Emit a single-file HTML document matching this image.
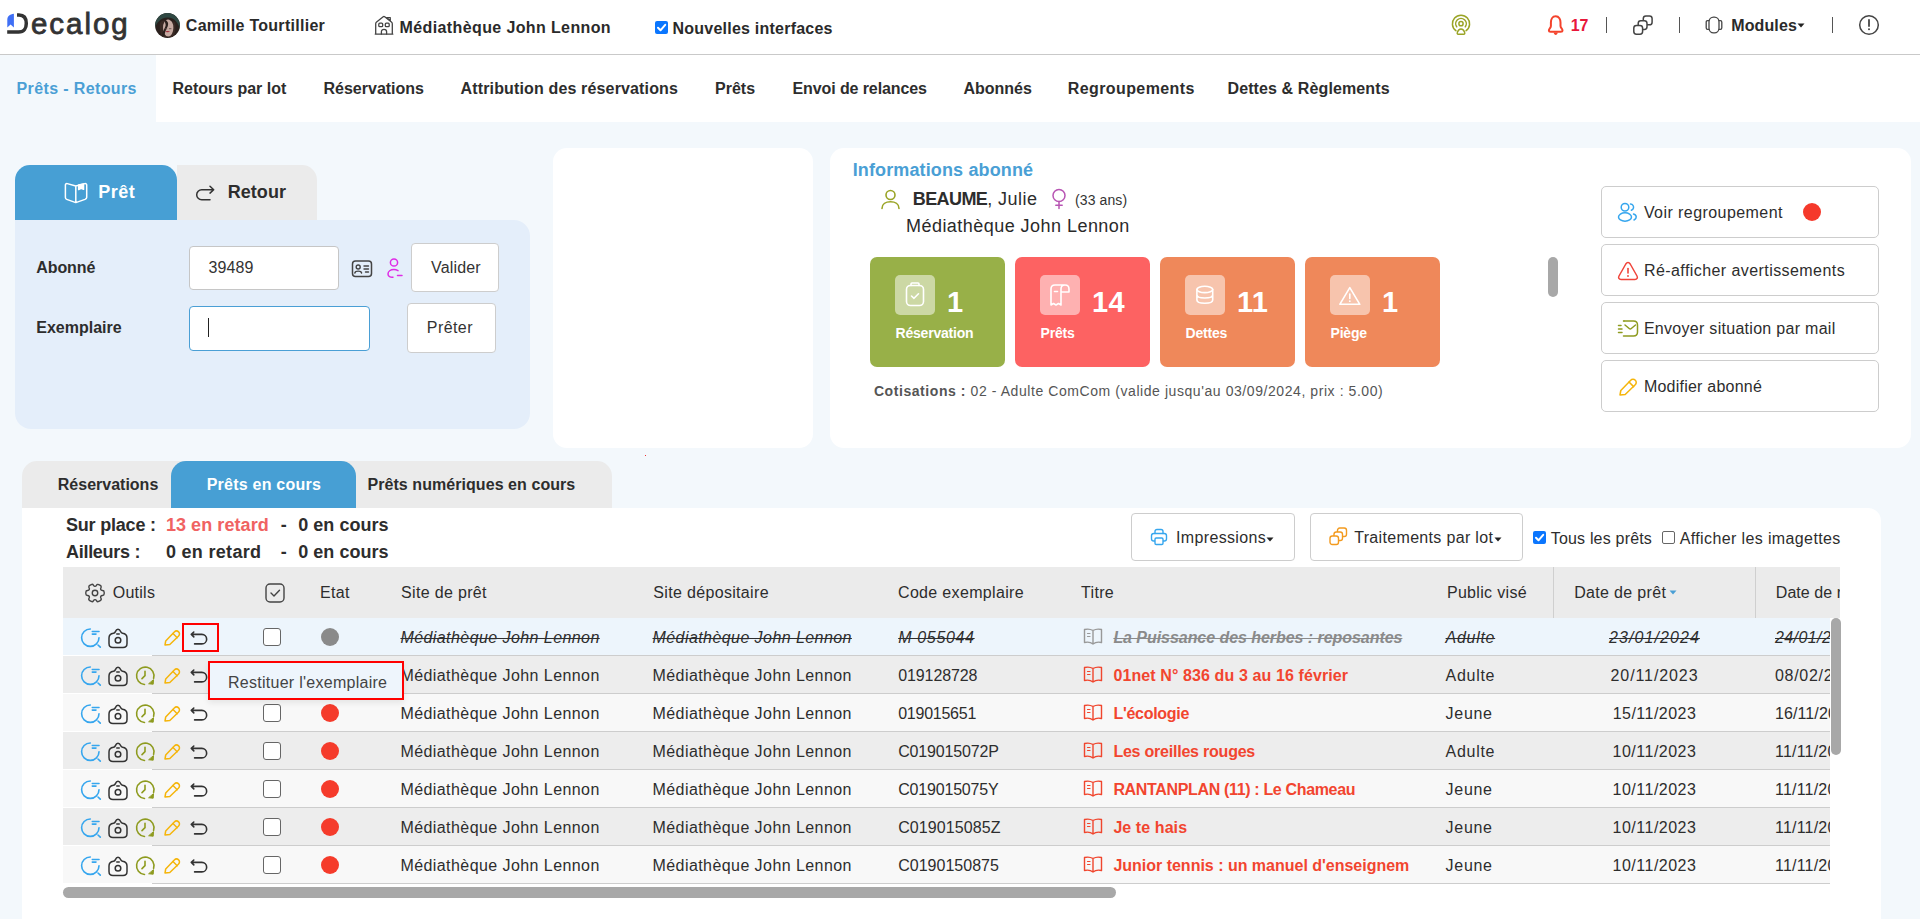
<!DOCTYPE html>
<html><head><meta charset="utf-8"><title>Decalog</title>
<style>
html,body{margin:0;padding:0;}
body{width:1920px;height:919px;overflow:hidden;position:relative;background:#f3f8fc;font-family:"Liberation Sans",sans-serif;}
.t{position:absolute;white-space:nowrap;line-height:1;}
svg{overflow:visible;}
</style></head><body>
<div style="position:absolute;left:0px;top:0px;width:1920px;height:54px;background:#fff;"></div>
<div style="position:absolute;left:0px;top:54px;width:1920px;height:1px;background:#c9c9c9;"></div>
<svg style="position:absolute;left:6px;top:12px;" width="24" height="24" viewBox="0 0 24 24" fill="none" stroke-linecap="round" stroke-linejoin="round"><path d="M1.3 15.6 V8 C1.3 4.5 3.5 2.2 7.9 1.8 V15.6 L4.6 12.6 Z" fill="#3f6ff5" stroke="none"/><path d="M11 2.9 H13 C18.3 2.9 20.3 6.8 20.3 11.4 C20.3 16 18.2 20.1 12.5 20.1 H1.2" stroke="#333" stroke-width="3.5" stroke-linecap="butt"/></svg>
<div class="t" style="left:31.0px;top:8.8px;font-size:29.5px;font-weight:400;color:#333;letter-spacing:1.95px;-webkit-text-stroke:0.8px #333;">ecalog</div>
<svg style="position:absolute;left:155px;top:13px;" width="25" height="25" viewBox="0 0 25 25" fill="none" stroke-linecap="round" stroke-linejoin="round"><defs><clipPath id="av"><circle cx="12.5" cy="12.5" r="12.4"/></clipPath></defs><g clip-path="url(#av)" stroke="none"><rect width="25" height="25" fill="#2a201d"/><path d="M0 0 H25 V17 C24 11 20 4.5 12.5 4.5 C5.5 4.5 1.5 10 0 15 Z" fill="#2f4843"/><path d="M5 10 C7 6 17 5.5 20 9.5 C21 13 20.5 20 18 24 L7 24 C5 20 4 14 5 10 Z" fill="#3a2a25"/><ellipse cx="13.2" cy="14.8" rx="5.2" ry="8.6" fill="#c6aaa2"/><path d="M8.5 6.5 C12 7 14 9.5 12.8 13 C12 15.5 10 17.5 9.5 23 L7 23 C7.5 17.5 11 14.5 10.6 11.5 C10.3 9.5 9.5 8 8.5 6.5 Z" fill="#2a201d"/><path d="M11 6.5 C14 6.5 17 7.5 18.5 10 L18 6.5 Z" fill="#2a201d"/><path d="M10.3 15.8 H11.8 M14.3 15.7 H16" stroke="#5a4440" stroke-width="0.8"/><ellipse cx="12.6" cy="18.6" rx="2.2" ry="0.7" fill="#a52f3a"/></g></svg>
<div class="t" style="left:185.8px;top:18.0px;font-size:16px;font-weight:700;color:#2a2a2a;letter-spacing:0.28px;">Camille Tourtillier</div>
<svg style="position:absolute;left:374px;top:15px;" width="20" height="20" viewBox="0 0 20 20" fill="none" stroke-linecap="round" stroke-linejoin="round"><path d="M1.2 19.1 H18.9 M1.7 19 V8.7 C1.7 8 2 7.5 2.6 7 L9.2 1.8 C9.7 1.4 10.2 1.4 10.7 1.8 L17.4 7 C18 7.5 18.3 8 18.3 8.7 V19" stroke="#444" stroke-width="1.3"/><path d="M12.6 2.6 H16.3 V5.6 Z" stroke="#444" stroke-width="1.2"/><rect x="4.8" y="8.2" width="3.9" height="3.5" rx="1" stroke="#444" stroke-width="1.3"/><rect x="11.3" y="8.2" width="3.9" height="3.5" rx="1" stroke="#444" stroke-width="1.3"/><path d="M7.4 19 V16.8 C7.4 15.3 8.5 14.4 10 14.4 C11.5 14.4 12.6 15.3 12.6 16.8 V19" stroke="#444" stroke-width="1.3"/></svg>
<div class="t" style="left:399.6px;top:19.7px;font-size:16px;font-weight:700;color:#2a2a2a;letter-spacing:0.38px;">Médiathèque John Lennon</div>
<div style="position:absolute;left:655px;top:21px;width:13px;height:13px;border-radius:2px;background:#0b76fe;"></div>
<svg style="position:absolute;left:655px;top:21px;" width="13" height="13" viewBox="0 0 13 13" fill="none" stroke-linecap="round" stroke-linejoin="round"><path d="M3 6.8 L5.5 9.3 L10.2 3.8" stroke="#fff" stroke-width="2"/></svg>
<div class="t" style="left:672.5px;top:20.5px;font-size:16px;font-weight:700;color:#2a2a2a;letter-spacing:0.23px;">Nouvelles interfaces</div>
<svg style="position:absolute;left:1451px;top:14px;" width="20" height="22" viewBox="0 0 20 22" fill="none" stroke-linecap="round" stroke-linejoin="round"><circle cx="10" cy="9.7" r="2.1" stroke="#9aa426" stroke-width="1.5"/><path d="M5.7 12.8 A5.3 5.3 0 1 1 14.3 12.8" stroke="#9aa426" stroke-width="1.5"/><path d="M4.9 16.7 A8.6 8.6 0 1 1 15.1 16.7" stroke="#9aa426" stroke-width="1.5"/><path d="M7.3 20.3 C6.3 20.3 6 19.3 6.4 18.3 C7 16.4 8.4 15 10 15 C11.6 15 13 16.4 13.6 18.3 C14 19.3 13.7 20.3 12.7 20.3 Z" stroke="#9aa426" stroke-width="1.5"/></svg>
<svg style="position:absolute;left:1547px;top:14px;" width="19" height="22" viewBox="0 0 19 22" fill="none" stroke-linecap="round" stroke-linejoin="round"><path d="M8.7 2.3 C5.3 2.3 3.9 5.5 3.9 8.5 V12 C3.9 13.8 1.9 14.8 1.9 16.3 C1.9 17.3 2.7 17.8 3.7 17.8 H13.7 C14.7 17.8 15.5 17.3 15.5 16.3 C15.5 14.8 13.5 13.8 13.5 12 V8.5 C13.5 5.5 12.1 2.3 8.7 2.3 Z" stroke="#f4432c" stroke-width="2"/><path d="M6.6 18.6 C6.9 20.3 7.7 21 8.7 21 C9.7 21 10.5 20.3 10.8 18.6 Z" fill="#f4432c" stroke="none"/></svg>
<div class="t" style="left:1570.7px;top:17.8px;font-size:16px;font-weight:700;color:#e8173a;letter-spacing:0px;">17</div>
<div style="position:absolute;left:1606px;top:17px;width:1px;height:16px;background:#555;"></div>
<svg style="position:absolute;left:1632px;top:15px;" width="22" height="21" viewBox="0 0 22 21" fill="none" stroke-linecap="round" stroke-linejoin="round"><rect x="11.3" y="1" width="8.8" height="8.8" rx="2.6" stroke="#444" stroke-width="1.5"/><rect x="6.2" y="5.8" width="8.8" height="8.6" rx="2.6" stroke="#444" stroke-width="1.5" fill="#fff"/><rect x="1.8" y="10.4" width="8.8" height="8.8" rx="2.6" stroke="#444" stroke-width="1.5" fill="#fff"/></svg>
<div style="position:absolute;left:1679px;top:17px;width:1px;height:16px;background:#555;"></div>
<svg style="position:absolute;left:1705px;top:16px;" width="18" height="18" viewBox="0 0 18 18" fill="none" stroke-linecap="round" stroke-linejoin="round"><rect x="4" y="1.2" width="10" height="15.6" rx="4.6" stroke="#444" stroke-width="1.3"/><path d="M4 4.6 H2.6 C1.6 4.6 1.2 5.2 1.2 6.2 V11.8 C1.2 12.8 1.6 13.4 2.6 13.4 H4 M14 4.6 H15.4 C16.4 4.6 16.8 5.2 16.8 6.2 V11.8 C16.8 12.8 16.4 13.4 15.4 13.4 H14" stroke="#444" stroke-width="1.3"/></svg>
<div class="t" style="left:1731.3px;top:18.2px;font-size:16px;font-weight:700;color:#2a2a2a;letter-spacing:0.1px;">Modules</div>
<svg style="position:absolute;left:1797px;top:23px;" width="8" height="5" viewBox="0 0 8 5" fill="none" stroke-linecap="round" stroke-linejoin="round"><path d="M0.5 0.5 H7.5 L4 4.5 Z" fill="#222" stroke="none"/></svg>
<div style="position:absolute;left:1832px;top:17px;width:1px;height:16px;background:#555;"></div>
<svg style="position:absolute;left:1858px;top:14px;" width="22" height="22" viewBox="0 0 22 22" fill="none" stroke-linecap="round" stroke-linejoin="round"><circle cx="11" cy="11" r="9.3" stroke="#444" stroke-width="1.5"/><path d="M11 6 V12" stroke="#444" stroke-width="1.8"/><circle cx="11" cy="15.3" r="1" fill="#444" stroke="none"/></svg>
<div style="position:absolute;left:0px;top:55px;width:1920px;height:67px;background:#fff;"></div>
<div style="position:absolute;left:0px;top:55px;width:156px;height:67px;background:#f3f8fc;"></div>
<div class="t" style="left:16.5px;top:81.4px;font-size:16px;font-weight:700;color:#4a9fd5;letter-spacing:0.38px;">Prêts - Retours</div>
<div class="t" style="left:172.5px;top:81.4px;font-size:16px;font-weight:700;color:#2d2d2d;letter-spacing:0px;">Retours par lot</div>
<div class="t" style="left:323.5px;top:81.4px;font-size:16px;font-weight:700;color:#2d2d2d;letter-spacing:0px;">Réservations</div>
<div class="t" style="left:460.5px;top:81.4px;font-size:16px;font-weight:700;color:#2d2d2d;letter-spacing:0.15px;">Attribution des réservations</div>
<div class="t" style="left:715.0px;top:81.4px;font-size:16px;font-weight:700;color:#2d2d2d;letter-spacing:0px;">Prêts</div>
<div class="t" style="left:792.5px;top:81.4px;font-size:16px;font-weight:700;color:#2d2d2d;letter-spacing:-0.1px;">Envoi de relances</div>
<div class="t" style="left:963.4px;top:81.4px;font-size:16px;font-weight:700;color:#2d2d2d;letter-spacing:0px;">Abonnés</div>
<div class="t" style="left:1067.8px;top:81.4px;font-size:16px;font-weight:700;color:#2d2d2d;letter-spacing:0.4px;">Regroupements</div>
<div class="t" style="left:1227.5px;top:81.4px;font-size:16px;font-weight:700;color:#2d2d2d;letter-spacing:0.11px;">Dettes &amp; Règlements</div>
<div style="position:absolute;left:15px;top:165px;width:162px;height:55px;background:#479fd4;border-radius:15px 15px 0 0;"></div>
<div style="position:absolute;left:177px;top:165px;width:140px;height:55px;background:#ebebeb;border-radius:0 15px 0 0;"></div>
<div style="position:absolute;left:15px;top:220px;width:515px;height:209px;background:#e4eefa;border-radius:0 16px 16px 16px;"></div>
<svg style="position:absolute;left:64px;top:182px;" width="24" height="23" viewBox="0 0 24 23" fill="none" stroke-linecap="round" stroke-linejoin="round"><path d="M11.8 4 L3.3 1.6 C2.2 1.3 1.4 2 1.4 3.1 V15.6 C1.4 16.5 1.9 17.1 2.7 17.4 L11.8 20.6 L21 17.4 C21.8 17.1 22.7 16.5 22.7 15.6 V3.1 C22.7 2 21.8 1.3 20.7 1.6 Z M11.8 4 V20.6" stroke="#fff" stroke-width="1.5"/><path d="M14.6 2.9 L19.6 1.9 V7.4 L17.1 6.3 L14.6 7.6 Z" stroke="#fff" stroke-width="1.4" fill="#fff"/></svg>
<div class="t" style="left:98.3px;top:182.6px;font-size:18px;font-weight:700;color:#fff;letter-spacing:0.5px;">Prêt</div>
<svg style="position:absolute;left:195px;top:185px;" width="20" height="17" viewBox="0 0 20 17" fill="none" stroke-linecap="round" stroke-linejoin="round"><path d="M15 1.3 L18.7 4.7 L15 8.1 M18.7 4.7 H6.7 A5 5 0 0 0 6.7 14.7 H15" stroke="#333" stroke-width="1.5"/></svg>
<div class="t" style="left:227.7px;top:182.6px;font-size:18px;font-weight:700;color:#2d2d2d;letter-spacing:0.06px;">Retour</div>
<div class="t" style="left:36.3px;top:259.6px;font-size:16px;font-weight:700;color:#2d2d2d;letter-spacing:-0.1px;">Abonné</div>
<div class="t" style="left:36.3px;top:319.8px;font-size:16px;font-weight:700;color:#2d2d2d;letter-spacing:0px;">Exemplaire</div>
<div style="position:absolute;left:189px;top:246px;width:148px;height:42px;background:#fff;border:1px solid #c6c6c6;border-radius:4px;"></div>
<div class="t" style="left:208.4px;top:259.5px;font-size:16px;font-weight:400;color:#333;letter-spacing:0.12px;">39489</div>
<svg style="position:absolute;left:351px;top:259px;" width="22" height="20" viewBox="0 0 22 20" fill="none" stroke-linecap="round" stroke-linejoin="round"><rect x="1.5" y="2" width="19" height="15.5" rx="3" stroke="#444" stroke-width="1.5"/><circle cx="7.2" cy="8" r="2" stroke="#444" stroke-width="1.4"/><path d="M3.8 14 C4.5 11.5 10 11.5 10.6 14" stroke="#444" stroke-width="1.4"/><path d="M13 7 H17.5 M13 10 H17.5 M14.5 13 H17.5" stroke="#444" stroke-width="1.4"/></svg>
<svg style="position:absolute;left:386px;top:257px;" width="18" height="22" viewBox="0 0 18 22" fill="none" stroke-linecap="round" stroke-linejoin="round"><circle cx="8" cy="5.5" r="3.6" stroke="#df2be6" stroke-width="1.5"/><path d="M12 13.6 C10.5 12.8 9 12.6 8 12.6 C4.5 12.6 2 14.5 2 17 C2 19.5 4.5 20.5 7 20.2" stroke="#df2be6" stroke-width="1.5"/><path d="M11.5 18.5 H16" stroke="#df2be6" stroke-width="1.5"/></svg>
<div style="position:absolute;left:411px;top:243px;width:88px;height:49px;background:#fff;border:1px solid #cdcdcd;border-radius:4px;box-sizing:border-box;"></div>
<div class="t" style="left:431.0px;top:259.7px;font-size:16px;font-weight:400;color:#333;letter-spacing:0.16px;">Valider</div>
<div style="position:absolute;left:189px;top:306px;width:179px;height:43px;background:#fff;border:1px solid #4a9fd5;border-radius:4px;"></div>
<div style="position:absolute;left:208px;top:318px;width:1.3px;height:19px;background:#222;"></div>
<div style="position:absolute;left:407px;top:303px;width:89px;height:50px;background:#fff;border:1px solid #cdcdcd;border-radius:4px;box-sizing:border-box;"></div>
<div class="t" style="left:426.8px;top:319.8px;font-size:16px;font-weight:400;color:#333;letter-spacing:0.42px;">Prêter</div>
<div style="position:absolute;left:553px;top:148px;width:260px;height:300px;background:#fff;border-radius:14px;"></div>
<div style="position:absolute;left:645px;top:455px;width:1px;height:1px;background:#e33;"></div>
<div style="position:absolute;left:830px;top:148px;width:1081px;height:300px;background:#fff;border-radius:14px;"></div>
<div class="t" style="left:852.7px;top:160.8px;font-size:18px;font-weight:700;color:#4a9fd5;letter-spacing:0.13px;">Informations abonné</div>
<svg style="position:absolute;left:880px;top:189px;" width="21" height="21" viewBox="0 0 21 21" fill="none" stroke-linecap="round" stroke-linejoin="round"><circle cx="10.5" cy="6" r="4.5" stroke="#9aa426" stroke-width="1.6"/><path d="M2 19.5 C2 15 6 12.8 10.5 12.8 C15 12.8 19 15 19 19.5" stroke="#9aa426" stroke-width="1.6"/></svg>
<div class="t" style="left:912.8px;top:190.1px;font-size:18px;font-weight:700;color:#2d2d2d;letter-spacing:-0.6px;">BEAUME<span style="font-weight:400;letter-spacing:0.45px">, Julie</span></div>
<svg style="position:absolute;left:1050px;top:188px;" width="18" height="22" viewBox="0 0 18 22" fill="none" stroke-linecap="round" stroke-linejoin="round"><circle cx="9" cy="7.5" r="6" stroke="#b855b3" stroke-width="1.5"/><path d="M9 13.5 V20.5 M5.8 17.3 H12.2" stroke="#b855b3" stroke-width="1.5"/></svg>
<div class="t" style="left:1075.0px;top:192.6px;font-size:14px;font-weight:400;color:#333;letter-spacing:0.1px;">(33 ans)</div>
<div class="t" style="left:906.0px;top:216.9px;font-size:18px;font-weight:400;color:#2a2a2a;letter-spacing:0.46px;">Médiathèque John Lennon</div>
<div style="position:absolute;left:870px;top:257px;width:135px;height:110px;background:#98b048;border-radius:7px;"></div>
<div style="position:absolute;left:895px;top:275px;width:40px;height:40px;background:rgba(255,255,255,0.5);border-radius:5px;"></div>
<div class="t" style="left:947.0px;top:287.9px;font-size:29px;font-weight:700;color:#fff;letter-spacing:0.3px;">1</div>
<div class="t" style="left:895.5px;top:325.8px;font-size:14px;font-weight:700;color:#fff;letter-spacing:-0.2px;">Réservation</div>
<div style="position:absolute;left:1015px;top:257px;width:135px;height:110px;background:#fd6262;border-radius:7px;"></div>
<div style="position:absolute;left:1040px;top:275px;width:40px;height:40px;background:rgba(255,255,255,0.5);border-radius:5px;"></div>
<div class="t" style="left:1092.0px;top:287.9px;font-size:29px;font-weight:700;color:#fff;letter-spacing:0.3px;">14</div>
<div class="t" style="left:1040.5px;top:325.8px;font-size:14px;font-weight:700;color:#fff;letter-spacing:-0.2px;">Prêts</div>
<div style="position:absolute;left:1160px;top:257px;width:135px;height:110px;background:#ef885a;border-radius:7px;"></div>
<div style="position:absolute;left:1185px;top:275px;width:40px;height:40px;background:rgba(255,255,255,0.5);border-radius:5px;"></div>
<div class="t" style="left:1237.0px;top:287.9px;font-size:29px;font-weight:700;color:#fff;letter-spacing:0.3px;">11</div>
<div class="t" style="left:1185.5px;top:325.8px;font-size:14px;font-weight:700;color:#fff;letter-spacing:-0.2px;">Dettes</div>
<div style="position:absolute;left:1305px;top:257px;width:135px;height:110px;background:#ef885a;border-radius:7px;"></div>
<div style="position:absolute;left:1330px;top:275px;width:40px;height:40px;background:rgba(255,255,255,0.5);border-radius:5px;"></div>
<div class="t" style="left:1382.0px;top:287.9px;font-size:29px;font-weight:700;color:#fff;letter-spacing:0.3px;">1</div>
<div class="t" style="left:1330.5px;top:325.8px;font-size:14px;font-weight:700;color:#fff;letter-spacing:-0.2px;">Piège</div>
<svg style="position:absolute;left:895px;top:275px;" width="40" height="40" viewBox="0 0 40 40" fill="none" stroke-linecap="round" stroke-linejoin="round"><rect x="11.5" y="10.5" width="17" height="20" rx="4" stroke="#fff" stroke-width="1.6"/><path d="M16 10.5 V9 C16 8.5 16.5 8 17 8 H23 C23.5 8 24 8.5 24 9 V10.5" stroke="#fff" stroke-width="1.6"/><path d="M16.5 21 L19 23.3 L23.5 18.8" stroke="#fff" stroke-width="1.6"/></svg>
<svg style="position:absolute;left:1040px;top:275px;" width="40" height="40" viewBox="0 0 40 40" fill="none" stroke-linecap="round" stroke-linejoin="round"><path d="M25 10 H15 C12.5 10 11 11.5 11 14 V30 L13.5 28.5 L16 30 L18.5 28.5 L21 30 V14 C21 11.5 22.5 10 25 10 C27.5 10 29 11.5 29 14 V17 H21" stroke="#fff" stroke-width="1.6"/><path d="M14.5 16.5 H17.5" stroke="#fff" stroke-width="1.6"/></svg>
<svg style="position:absolute;left:1185px;top:275px;" width="40" height="40" viewBox="0 0 40 40" fill="none" stroke-linecap="round" stroke-linejoin="round"><ellipse cx="19.8" cy="14.4" rx="7.9" ry="3.2" stroke="#fff" stroke-width="1.6"/><path d="M11.9 14.4 V25 C11.9 27 15.4 28.3 19.8 28.3 C24.2 28.3 27.7 27 27.7 25 V14.4 M11.9 19.7 C11.9 21.7 15.4 23 19.8 23 C24.2 23 27.7 21.7 27.7 19.7" stroke="#fff" stroke-width="1.6"/></svg>
<svg style="position:absolute;left:1330px;top:275px;" width="40" height="40" viewBox="0 0 40 40" fill="none" stroke-linecap="round" stroke-linejoin="round"><path d="M19.8 12.6 L29.8 29.3 H9.8 Z" stroke="#fff" stroke-width="1.6"/><path d="M19.8 19 V23.5" stroke="#fff" stroke-width="1.6"/><circle cx="19.8" cy="26.2" r="0.9" fill="#fff" stroke="none"/></svg>
<div class="t" style="left:873.9px;top:383.9px;font-size:14px;font-weight:400;color:#555;letter-spacing:0.57px;"><b>Cotisations :</b> 02 - Adulte ComCom (valide jusqu'au 03/09/2024, prix : 5.00)</div>
<div style="position:absolute;left:1548px;top:257px;width:10px;height:40px;background:#a8a8a8;border-radius:5px;"></div>
<div style="position:absolute;left:1601px;top:186px;width:278px;height:52px;background:#fff;border:1px solid #cdcdcd;border-radius:5px;box-sizing:border-box;"></div>
<div class="t" style="left:1643.9px;top:205.0px;font-size:16px;font-weight:400;color:#2d2d2d;letter-spacing:0.43px;">Voir regroupement</div>
<div style="position:absolute;left:1601px;top:244px;width:278px;height:52px;background:#fff;border:1px solid #cdcdcd;border-radius:5px;box-sizing:border-box;"></div>
<div class="t" style="left:1643.9px;top:263.0px;font-size:16px;font-weight:400;color:#2d2d2d;letter-spacing:0.43px;">Ré-afficher avertissements</div>
<div style="position:absolute;left:1601px;top:302px;width:278px;height:52px;background:#fff;border:1px solid #cdcdcd;border-radius:5px;box-sizing:border-box;"></div>
<div class="t" style="left:1643.9px;top:321.0px;font-size:16px;font-weight:400;color:#2d2d2d;letter-spacing:0.29px;">Envoyer situation par mail</div>
<div style="position:absolute;left:1601px;top:360px;width:278px;height:52px;background:#fff;border:1px solid #cdcdcd;border-radius:5px;box-sizing:border-box;"></div>
<div class="t" style="left:1643.9px;top:379.0px;font-size:16px;font-weight:400;color:#2d2d2d;letter-spacing:0.23px;">Modifier abonné</div>
<div style="position:absolute;left:1803px;top:203px;width:18px;height:18px;border-radius:50%;background:#f5392b;"></div>
<svg style="position:absolute;left:1617px;top:202px;" width="22" height="21" viewBox="0 0 22 21" fill="none" stroke-linecap="round" stroke-linejoin="round"><circle cx="8" cy="5.3" r="3.8" stroke="#36a6ee" stroke-width="1.5"/><path d="M13.5 2 C15.8 2.3 16.8 4 16.5 5.8 C16.3 7 15.5 7.8 14.4 8.2" stroke="#36a6ee" stroke-width="1.5"/><ellipse cx="8" cy="15" rx="6.5" ry="4.2" stroke="#36a6ee" stroke-width="1.5"/><path d="M16.5 12 C18.8 12.8 19.5 14.5 19 16 C18.7 17 17.8 17.6 17 18" stroke="#36a6ee" stroke-width="1.5"/></svg>
<svg style="position:absolute;left:1617px;top:260px;" width="22" height="21" viewBox="0 0 22 21" fill="none" stroke-linecap="round" stroke-linejoin="round"><path d="M11 2.5 C10 2.5 9.4 3 8.8 4 L2 16 C1 17.8 2 19.5 4 19.5 H18 C20 19.5 21 17.8 20 16 L13.2 4 C12.6 3 12 2.5 11 2.5 Z" stroke="#f0443a" stroke-width="1.5"/><path d="M11 8.5 V13" stroke="#f0443a" stroke-width="1.6"/><circle cx="11" cy="16" r="0.9" fill="#f0443a" stroke="none"/></svg>
<svg style="position:absolute;left:1617px;top:318px;" width="22" height="21" viewBox="0 0 22 21" fill="none" stroke-linecap="round" stroke-linejoin="round"><path d="M6.5 3 H16.5 C19 3 20.5 4.5 20.5 7 V14 C20.5 16.5 19 18 16.5 18 H6.5" stroke="#8e9b1f" stroke-width="1.5"/><path d="M7 3 V3 M8 7 L12.2 10.5 C12.8 11 13.7 11 14.3 10.5 L18.5 7" stroke="#8e9b1f" stroke-width="1.5"/><path d="M1.5 11 H5 M1.5 14.5 H5 M1.5 7.5 H4" stroke="#8e9b1f" stroke-width="1.5"/></svg>
<svg style="position:absolute;left:1617px;top:376px;" width="22" height="21" viewBox="0 0 22 21" fill="none" stroke-linecap="round" stroke-linejoin="round"><path d="M3 19 L3.8 14.5 L13.5 4.5 C15 3 17 3 18.3 4.3 C19.6 5.6 19.6 7.6 18 9 L8.2 18.5 Z" stroke="#f5b50b" stroke-width="1.5"/><path d="M12 6 L16.6 10.6" stroke="#f5b50b" stroke-width="1.5"/></svg>
<div style="position:absolute;left:22px;top:461px;width:590px;height:47px;background:#ebebeb;border-radius:15px 15px 0 0;"></div>
<div style="position:absolute;left:171px;top:461px;width:185px;height:47px;background:#479fd4;border-radius:15px 15px 0 0;"></div>
<div class="t" style="left:57.8px;top:476.5px;font-size:16px;font-weight:700;color:#2d2d2d;letter-spacing:0.0px;">Réservations</div>
<div class="t" style="left:206.7px;top:476.5px;font-size:16px;font-weight:700;color:#fff;letter-spacing:0.23px;">Prêts en cours</div>
<div class="t" style="left:367.5px;top:476.5px;font-size:16px;font-weight:700;color:#2d2d2d;letter-spacing:0.06px;">Prêts numériques en cours</div>
<div style="position:absolute;left:22px;top:508px;width:1859px;height:411px;background:#fff;border-radius:0 13px 0 0;"></div>
<div class="t" style="left:66.0px;top:515.7px;font-size:18px;font-weight:700;color:#2d2d2d;letter-spacing:-0.2px;">Sur place :</div>
<div class="t" style="left:165.9px;top:515.7px;font-size:18px;font-weight:700;color:#f06262;letter-spacing:0.07px;">13 en retard</div>
<div class="t" style="left:280.7px;top:515.7px;font-size:18px;font-weight:700;color:#2d2d2d;letter-spacing:0px;">-</div>
<div class="t" style="left:298.2px;top:515.7px;font-size:18px;font-weight:700;color:#2d2d2d;letter-spacing:0.04px;">0 en cours</div>
<div class="t" style="left:66.0px;top:542.6px;font-size:18px;font-weight:700;color:#2d2d2d;letter-spacing:-0.29px;">Ailleurs :</div>
<div class="t" style="left:165.9px;top:542.6px;font-size:18px;font-weight:700;color:#2d2d2d;letter-spacing:0.31px;">0 en retard</div>
<div class="t" style="left:280.7px;top:542.6px;font-size:18px;font-weight:700;color:#2d2d2d;letter-spacing:0px;">-</div>
<div class="t" style="left:298.2px;top:542.6px;font-size:18px;font-weight:700;color:#2d2d2d;letter-spacing:0.04px;">0 en cours</div>
<div style="position:absolute;left:1131px;top:513px;width:164px;height:48px;background:#fff;border:1px solid #cdcdcd;border-radius:4px;box-sizing:border-box;"></div>
<div class="t" style="left:1176.0px;top:530.0px;font-size:16px;font-weight:400;color:#2d2d2d;letter-spacing:0.35px;">Impressions</div>
<svg style="position:absolute;left:1266px;top:537px;" width="8" height="5" viewBox="0 0 8 5" fill="none" stroke-linecap="round" stroke-linejoin="round"><path d="M0.5 0.5 H7.5 L4 4.5 Z" fill="#222" stroke="none"/></svg>
<svg style="position:absolute;left:1150px;top:528px;" width="18" height="18" viewBox="0 0 18 18" fill="none" stroke-linecap="round" stroke-linejoin="round"><path d="M5 5.5 V3.5 C5 2.3 5.8 1.5 7 1.5 H11 C12.2 1.5 13 2.3 13 3.5 V5.5" stroke="#36a6ee" stroke-width="1.4"/><rect x="1.5" y="5.5" width="15" height="7.5" rx="2.2" stroke="#36a6ee" stroke-width="1.4"/><rect x="5" y="10" width="8" height="6.5" rx="1.2" stroke="#36a6ee" stroke-width="1.4" fill="#fff"/></svg>
<div style="position:absolute;left:1310px;top:513px;width:213px;height:48px;background:#fff;border:1px solid #cdcdcd;border-radius:4px;box-sizing:border-box;"></div>
<div class="t" style="left:1354.2px;top:530.0px;font-size:16px;font-weight:400;color:#2d2d2d;letter-spacing:0.33px;">Traitements par lot</div>
<svg style="position:absolute;left:1494px;top:537px;" width="8" height="5" viewBox="0 0 8 5" fill="none" stroke-linecap="round" stroke-linejoin="round"><path d="M0.5 0.5 H7.5 L4 4.5 Z" fill="#222" stroke="none"/></svg>
<svg style="position:absolute;left:1329px;top:527px;" width="19" height="19" viewBox="0 0 19 19" fill="none" stroke-linecap="round" stroke-linejoin="round"><rect x="8.5" y="1" width="9" height="8.5" rx="2.2" stroke="#f39a1e" stroke-width="1.4"/><rect x="5" y="5" width="8.5" height="8.5" rx="2.2" stroke="#f39a1e" stroke-width="1.4" fill="#fff"/><rect x="1" y="9" width="8.5" height="8.5" rx="2.2" stroke="#f39a1e" stroke-width="1.4" fill="#fff"/></svg>
<div style="position:absolute;left:1533px;top:531px;width:13px;height:13px;border-radius:2px;background:#0b76fe;"></div>
<svg style="position:absolute;left:1533px;top:531px;" width="13" height="13" viewBox="0 0 13 13" fill="none" stroke-linecap="round" stroke-linejoin="round"><path d="M3 6.8 L5.5 9.3 L10.2 3.8" stroke="#fff" stroke-width="2"/></svg>
<div class="t" style="left:1550.7px;top:531.0px;font-size:16px;font-weight:400;color:#2d2d2d;letter-spacing:0.19px;">Tous les prêts</div>
<div style="position:absolute;left:1662px;top:531px;width:11px;height:11px;border-radius:2px;border:1px solid #666;background:#fff;"></div>
<div class="t" style="left:1679.7px;top:531.0px;font-size:16px;font-weight:400;color:#2d2d2d;letter-spacing:0.38px;">Afficher les imagettes</div>
<div style="position:absolute;left:63px;top:567px;width:1777px;height:51px;background:#ebebeb;"></div>
<div style="position:absolute;left:1553px;top:567px;width:1px;height:51px;background:#cfcfcf;"></div>
<div style="position:absolute;left:1755px;top:567px;width:1px;height:51px;background:#cfcfcf;"></div>
<svg style="position:absolute;left:84px;top:582px;" width="22" height="22" viewBox="0 0 24 24" fill="none" stroke-linecap="round" stroke-linejoin="round"><circle cx="12" cy="12" r="3" stroke="#444" stroke-width="1.5"/><path d="M2 12.88v-1.76c0-1.04.85-1.9 1.9-1.9 1.81 0 2.55-1.28 1.64-2.85-.52-.9-.21-2.07.7-2.59l1.73-.99c.79-.47 1.81-.19 2.28.6l.11.19c.9 1.57 2.38 1.57 3.29 0l.11-.19c.47-.79 1.49-1.07 2.28-.6l1.73.99c.91.52 1.220 1.69.7 2.59-.91 1.570-.17 2.850 1.64 2.850 1.04 0 1.9.85 1.9 1.9v1.76c0 1.04-.85 1.9-1.9 1.9-1.81 0-2.55 1.28-1.64 2.85.52.91.21 2.07-.7 2.59l-1.73.99c-.79.47-1.81.19-2.28-.6l-.11-.19c-.9-1.57-2.38-1.57-3.29 0l-.11.19c-.47.79-1.49 1.07-2.28.6l-1.73-.99a1.899 1.899 0 0 1-.7-2.59c.91-1.57.17-2.85-1.64-2.85-1.05 0-1.9-.86-1.9-1.9Z" stroke="#444" stroke-width="1.5"/></svg>
<div class="t" style="left:112.7px;top:585.3px;font-size:16px;font-weight:400;color:#2d2d2d;letter-spacing:0.26px;">Outils</div>
<svg style="position:absolute;left:264px;top:582px;" width="22" height="22" viewBox="0 0 22 22" fill="none" stroke-linecap="round" stroke-linejoin="round"><rect x="2" y="2" width="18" height="18" rx="4" stroke="#444" stroke-width="1.4"/><path d="M7 11 L10 14 L15.5 8.2" stroke="#444" stroke-width="1.4"/></svg>
<div style="position:absolute;left:0;top:0;width:1840px;height:919px;overflow:hidden;">
<div class="t" style="left:320.0px;top:585.3px;font-size:16px;font-weight:400;color:#2d2d2d;letter-spacing:0.33px;">Etat</div>
<div class="t" style="left:401.0px;top:585.3px;font-size:16px;font-weight:400;color:#2d2d2d;letter-spacing:0.33px;">Site de prêt</div>
<div class="t" style="left:653.3px;top:585.3px;font-size:16px;font-weight:400;color:#2d2d2d;letter-spacing:0.33px;">Site dépositaire</div>
<div class="t" style="left:898.0px;top:585.3px;font-size:16px;font-weight:400;color:#2d2d2d;letter-spacing:0.33px;">Code exemplaire</div>
<div class="t" style="left:1081.0px;top:585.3px;font-size:16px;font-weight:400;color:#2d2d2d;letter-spacing:0.33px;">Titre</div>
<div class="t" style="left:1446.9px;top:585.3px;font-size:16px;font-weight:400;color:#2d2d2d;letter-spacing:0.33px;">Public visé</div>
<div class="t" style="left:1574.2px;top:585.3px;font-size:16px;font-weight:400;color:#2d2d2d;letter-spacing:0.33px;">Date de prêt</div>
<div class="t" style="left:1775.8px;top:585.3px;font-size:16px;font-weight:400;color:#2d2d2d;letter-spacing:0.05px;">Date de retour</div>
</div>
<svg style="position:absolute;left:1669px;top:590px;" width="8" height="5" viewBox="0 0 8 5" fill="none" stroke-linecap="round" stroke-linejoin="round"><path d="M0.5 0.5 H7.5 L4 4.5 Z" fill="#4a9fd5" stroke="none"/></svg>
<div style="position:absolute;left:0;top:0;width:1830px;height:884px;overflow:hidden;">
<div style="position:absolute;left:63px;top:618px;width:1767px;height:37px;background:#edf5fc;"></div>
<div style="position:absolute;left:152px;top:655px;width:1678px;height:1px;background:#cdcdcd;"></div>
<div class="t" style="left:400.4px;top:630.1px;font-size:16px;font-weight:400;color:#2d2d2d;letter-spacing:0.43px;text-decoration:line-through;font-style:italic;">Médiathèque John Lennon</div>
<div class="t" style="left:652.5px;top:630.1px;font-size:16px;font-weight:400;color:#2d2d2d;letter-spacing:0.43px;text-decoration:line-through;font-style:italic;">Médiathèque John Lennon</div>
<div class="t" style="left:898.2px;top:630.1px;font-size:16px;font-weight:400;color:#2d2d2d;letter-spacing:0.66px;text-decoration:line-through;font-style:italic;">M 055044</div>
<div class="t" style="left:1113.4px;top:630.1px;font-size:16px;font-weight:700;color:#8a8a8a;letter-spacing:-0.05px;text-decoration:line-through;font-style:italic;">La Puissance des herbes : reposantes</div>
<div class="t" style="left:1445.6px;top:630.1px;font-size:16px;font-weight:400;color:#2d2d2d;letter-spacing:0.7px;text-decoration:line-through;font-style:italic;">Adulte</div>
<div class="t" style="left:1554.0px;top:630.1px;font-size:16px;font-weight:400;color:#2d2d2d;letter-spacing:1.07px;text-decoration:line-through;font-style:italic;width:201px;text-align:center;">23/01/2024</div>
<div class="t" style="left:1775.0px;top:630.1px;font-size:16px;font-weight:400;color:#2d2d2d;letter-spacing:0.4px;text-decoration:line-through;font-style:italic;">24/01/2024</div>
<svg style="position:absolute;left:1083px;top:627px;" width="20" height="19" viewBox="0 0 20 19" fill="none" stroke-linecap="round" stroke-linejoin="round"><path d="M10 3.5 C7.5 2 4.5 1.8 1.5 2.5 V15.5 C4.5 14.8 7.5 15 10 17 C12.5 15 15.5 14.8 18.5 15.5 V2.5 C15.5 1.8 12.5 2 10 3.5 Z M10 3.5 V17" stroke="#999" stroke-width="1.4"/><path d="M4.5 6.5 H7 M4.5 9.5 H7" stroke="#999" stroke-width="1.2"/></svg>
<svg style="position:absolute;left:80px;top:628px;" width="22" height="21" viewBox="0 0 22 21" fill="none" stroke-linecap="round" stroke-linejoin="round"><path d="M10.3 1 A8.7 8.7 0 1 0 19 9.7" stroke="#36a6ee" stroke-width="1.6"/><path d="M12.3 3.5 H19 M12.3 6.1 H16 M18 17 L20.3 19.2" stroke="#36a6ee" stroke-width="1.6"/></svg>
<svg style="position:absolute;left:107px;top:628px;" width="22" height="21" viewBox="0 0 22 21" fill="none" stroke-linecap="round" stroke-linejoin="round"><path d="M2 10 C2 7 3.5 5.5 6.5 5.2 C7.5 5.1 8 4.6 8.4 3.6 C9 2 9.8 1.2 11 1.2 C12.2 1.2 13 2 13.6 3.6 C14 4.6 14.5 5.1 15.5 5.2 C18.5 5.5 20 7 20 10 V15.5 C20 18 18.5 19.5 16 19.5 H6 C3.5 19.5 2 18 2 15.5 Z" stroke="#333" stroke-width="1.5"/><circle cx="11" cy="12.2" r="2.8" stroke="#333" stroke-width="1.5"/><path d="M9.7 6 H12.3" stroke="#333" stroke-width="1.3"/></svg>
<svg style="position:absolute;left:163px;top:628px;" width="18" height="19" viewBox="0 0 18 19" fill="none" stroke-linecap="round" stroke-linejoin="round"><path d="M2 17 L2.7 13 L11.3 4 C12.6 2.7 14.4 2.7 15.6 3.9 C16.8 5.1 16.8 6.9 15.4 8.2 L6.8 16.5 Z" stroke="#f5b50b" stroke-width="1.5"/><path d="M10 5.5 L14.2 9.7" stroke="#f5b50b" stroke-width="1.5"/></svg>
<svg style="position:absolute;left:190px;top:629px;" width="18" height="16" viewBox="0 0 18 16" fill="none" stroke-linecap="round" stroke-linejoin="round"><path d="M3.8 3 L1.3 5.4 L3.8 7.9 M1.3 5.4 H11.9 A4.75 4.75 0 0 1 11.9 14.9 H4.6" stroke="#333" stroke-width="1.6"/></svg>
<div style="position:absolute;left:263px;top:628px;width:16px;height:16px;background:#fff;border:1px solid #666;border-radius:3px;"></div>
<div style="position:absolute;left:321px;top:628px;width:18px;height:18px;border-radius:50%;background:#8a8a8a;"></div>
<div style="position:absolute;left:63px;top:656px;width:1767px;height:37px;background:#ededed;"></div>
<div style="position:absolute;left:152px;top:693px;width:1678px;height:1px;background:#cdcdcd;"></div>
<div class="t" style="left:400.4px;top:668.1px;font-size:16px;font-weight:400;color:#2d2d2d;letter-spacing:0.43px;">Médiathèque John Lennon</div>
<div class="t" style="left:652.5px;top:668.1px;font-size:16px;font-weight:400;color:#2d2d2d;letter-spacing:0.43px;">Médiathèque John Lennon</div>
<div class="t" style="left:898.2px;top:668.1px;font-size:16px;font-weight:400;color:#2d2d2d;letter-spacing:-0.1px;">019128728</div>
<div class="t" style="left:1113.4px;top:668.1px;font-size:16px;font-weight:700;color:#f2452f;letter-spacing:0.11px;">01net N° 836 du 3 au 16 février</div>
<div class="t" style="left:1445.6px;top:668.1px;font-size:16px;font-weight:400;color:#2d2d2d;letter-spacing:0.7px;">Adulte</div>
<div class="t" style="left:1554.0px;top:668.1px;font-size:16px;font-weight:400;color:#2d2d2d;letter-spacing:0.9px;width:201px;text-align:center;">20/11/2023</div>
<div class="t" style="left:1775.0px;top:668.1px;font-size:16px;font-weight:400;color:#2d2d2d;letter-spacing:0.7px;">08/02/2024</div>
<svg style="position:absolute;left:1083px;top:665px;" width="20" height="19" viewBox="0 0 20 19" fill="none" stroke-linecap="round" stroke-linejoin="round"><path d="M10 3.5 C7.5 2 4.5 1.8 1.5 2.5 V15.5 C4.5 14.8 7.5 15 10 17 C12.5 15 15.5 14.8 18.5 15.5 V2.5 C15.5 1.8 12.5 2 10 3.5 Z M10 3.5 V17" stroke="#f0462e" stroke-width="1.4"/><path d="M4.5 6.5 H7 M4.5 9.5 H7" stroke="#f0462e" stroke-width="1.2"/></svg>
<svg style="position:absolute;left:80px;top:666px;" width="22" height="21" viewBox="0 0 22 21" fill="none" stroke-linecap="round" stroke-linejoin="round"><path d="M10.3 1 A8.7 8.7 0 1 0 19 9.7" stroke="#36a6ee" stroke-width="1.6"/><path d="M12.3 3.5 H19 M12.3 6.1 H16 M18 17 L20.3 19.2" stroke="#36a6ee" stroke-width="1.6"/></svg>
<svg style="position:absolute;left:107px;top:666px;" width="22" height="21" viewBox="0 0 22 21" fill="none" stroke-linecap="round" stroke-linejoin="round"><path d="M2 10 C2 7 3.5 5.5 6.5 5.2 C7.5 5.1 8 4.6 8.4 3.6 C9 2 9.8 1.2 11 1.2 C12.2 1.2 13 2 13.6 3.6 C14 4.6 14.5 5.1 15.5 5.2 C18.5 5.5 20 7 20 10 V15.5 C20 18 18.5 19.5 16 19.5 H6 C3.5 19.5 2 18 2 15.5 Z" stroke="#333" stroke-width="1.5"/><circle cx="11" cy="12.2" r="2.8" stroke="#333" stroke-width="1.5"/><path d="M9.7 6 H12.3" stroke="#333" stroke-width="1.3"/></svg>
<svg style="position:absolute;left:135px;top:666px;" width="22" height="21" viewBox="0 0 22 21" fill="none" stroke-linecap="round" stroke-linejoin="round"><path d="M18.6 12.3 A8.7 8.7 0 1 0 9.5 18.5" stroke="#8e9b1f" stroke-width="1.6"/><path d="M10 5.3 V9.7 L7 12.6" stroke="#8e9b1f" stroke-width="1.6"/><path d="M18.5 14 L18.2 18.2 L14 17.8 Z" fill="#8e9b1f" stroke="#8e9b1f" stroke-width="1"/></svg>
<svg style="position:absolute;left:163px;top:666px;" width="18" height="19" viewBox="0 0 18 19" fill="none" stroke-linecap="round" stroke-linejoin="round"><path d="M2 17 L2.7 13 L11.3 4 C12.6 2.7 14.4 2.7 15.6 3.9 C16.8 5.1 16.8 6.9 15.4 8.2 L6.8 16.5 Z" stroke="#f5b50b" stroke-width="1.5"/><path d="M10 5.5 L14.2 9.7" stroke="#f5b50b" stroke-width="1.5"/></svg>
<svg style="position:absolute;left:190px;top:667px;" width="18" height="16" viewBox="0 0 18 16" fill="none" stroke-linecap="round" stroke-linejoin="round"><path d="M3.8 3 L1.3 5.4 L3.8 7.9 M1.3 5.4 H11.9 A4.75 4.75 0 0 1 11.9 14.9 H4.6" stroke="#333" stroke-width="1.6"/></svg>
<div style="position:absolute;left:263px;top:666px;width:16px;height:16px;background:#fff;border:1px solid #666;border-radius:3px;"></div>
<div style="position:absolute;left:321px;top:666px;width:18px;height:18px;border-radius:50%;background:#f53b2b;"></div>
<div style="position:absolute;left:63px;top:694px;width:1767px;height:37px;background:#f8f8f8;"></div>
<div style="position:absolute;left:152px;top:731px;width:1678px;height:1px;background:#cdcdcd;"></div>
<div class="t" style="left:400.4px;top:706.1px;font-size:16px;font-weight:400;color:#2d2d2d;letter-spacing:0.43px;">Médiathèque John Lennon</div>
<div class="t" style="left:652.5px;top:706.1px;font-size:16px;font-weight:400;color:#2d2d2d;letter-spacing:0.43px;">Médiathèque John Lennon</div>
<div class="t" style="left:898.2px;top:706.1px;font-size:16px;font-weight:400;color:#2d2d2d;letter-spacing:-0.25px;">019015651</div>
<div class="t" style="left:1113.4px;top:706.1px;font-size:16px;font-weight:700;color:#f2452f;letter-spacing:-0.28px;">L'écologie</div>
<div class="t" style="left:1445.6px;top:706.1px;font-size:16px;font-weight:400;color:#2d2d2d;letter-spacing:0.7px;">Jeune</div>
<div class="t" style="left:1554.0px;top:706.1px;font-size:16px;font-weight:400;color:#2d2d2d;letter-spacing:0.46px;width:201px;text-align:center;">15/11/2023</div>
<div class="t" style="left:1775.0px;top:706.1px;font-size:16px;font-weight:400;color:#2d2d2d;letter-spacing:0.1px;">16/11/2023</div>
<svg style="position:absolute;left:1083px;top:703px;" width="20" height="19" viewBox="0 0 20 19" fill="none" stroke-linecap="round" stroke-linejoin="round"><path d="M10 3.5 C7.5 2 4.5 1.8 1.5 2.5 V15.5 C4.5 14.8 7.5 15 10 17 C12.5 15 15.5 14.8 18.5 15.5 V2.5 C15.5 1.8 12.5 2 10 3.5 Z M10 3.5 V17" stroke="#f0462e" stroke-width="1.4"/><path d="M4.5 6.5 H7 M4.5 9.5 H7" stroke="#f0462e" stroke-width="1.2"/></svg>
<svg style="position:absolute;left:80px;top:704px;" width="22" height="21" viewBox="0 0 22 21" fill="none" stroke-linecap="round" stroke-linejoin="round"><path d="M10.3 1 A8.7 8.7 0 1 0 19 9.7" stroke="#36a6ee" stroke-width="1.6"/><path d="M12.3 3.5 H19 M12.3 6.1 H16 M18 17 L20.3 19.2" stroke="#36a6ee" stroke-width="1.6"/></svg>
<svg style="position:absolute;left:107px;top:704px;" width="22" height="21" viewBox="0 0 22 21" fill="none" stroke-linecap="round" stroke-linejoin="round"><path d="M2 10 C2 7 3.5 5.5 6.5 5.2 C7.5 5.1 8 4.6 8.4 3.6 C9 2 9.8 1.2 11 1.2 C12.2 1.2 13 2 13.6 3.6 C14 4.6 14.5 5.1 15.5 5.2 C18.5 5.5 20 7 20 10 V15.5 C20 18 18.5 19.5 16 19.5 H6 C3.5 19.5 2 18 2 15.5 Z" stroke="#333" stroke-width="1.5"/><circle cx="11" cy="12.2" r="2.8" stroke="#333" stroke-width="1.5"/><path d="M9.7 6 H12.3" stroke="#333" stroke-width="1.3"/></svg>
<svg style="position:absolute;left:135px;top:704px;" width="22" height="21" viewBox="0 0 22 21" fill="none" stroke-linecap="round" stroke-linejoin="round"><path d="M18.6 12.3 A8.7 8.7 0 1 0 9.5 18.5" stroke="#8e9b1f" stroke-width="1.6"/><path d="M10 5.3 V9.7 L7 12.6" stroke="#8e9b1f" stroke-width="1.6"/><path d="M18.5 14 L18.2 18.2 L14 17.8 Z" fill="#8e9b1f" stroke="#8e9b1f" stroke-width="1"/></svg>
<svg style="position:absolute;left:163px;top:704px;" width="18" height="19" viewBox="0 0 18 19" fill="none" stroke-linecap="round" stroke-linejoin="round"><path d="M2 17 L2.7 13 L11.3 4 C12.6 2.7 14.4 2.7 15.6 3.9 C16.8 5.1 16.8 6.9 15.4 8.2 L6.8 16.5 Z" stroke="#f5b50b" stroke-width="1.5"/><path d="M10 5.5 L14.2 9.7" stroke="#f5b50b" stroke-width="1.5"/></svg>
<svg style="position:absolute;left:190px;top:705px;" width="18" height="16" viewBox="0 0 18 16" fill="none" stroke-linecap="round" stroke-linejoin="round"><path d="M3.8 3 L1.3 5.4 L3.8 7.9 M1.3 5.4 H11.9 A4.75 4.75 0 0 1 11.9 14.9 H4.6" stroke="#333" stroke-width="1.6"/></svg>
<div style="position:absolute;left:263px;top:704px;width:16px;height:16px;background:#fff;border:1px solid #666;border-radius:3px;"></div>
<div style="position:absolute;left:321px;top:704px;width:18px;height:18px;border-radius:50%;background:#f53b2b;"></div>
<div style="position:absolute;left:63px;top:732px;width:1767px;height:37px;background:#ededed;"></div>
<div style="position:absolute;left:152px;top:769px;width:1678px;height:1px;background:#cdcdcd;"></div>
<div class="t" style="left:400.4px;top:744.1px;font-size:16px;font-weight:400;color:#2d2d2d;letter-spacing:0.43px;">Médiathèque John Lennon</div>
<div class="t" style="left:652.5px;top:744.1px;font-size:16px;font-weight:400;color:#2d2d2d;letter-spacing:0.43px;">Médiathèque John Lennon</div>
<div class="t" style="left:898.2px;top:744.1px;font-size:16px;font-weight:400;color:#2d2d2d;letter-spacing:-0.16px;">C019015072P</div>
<div class="t" style="left:1113.4px;top:744.1px;font-size:16px;font-weight:700;color:#f2452f;letter-spacing:-0.22px;">Les oreilles rouges</div>
<div class="t" style="left:1445.6px;top:744.1px;font-size:16px;font-weight:400;color:#2d2d2d;letter-spacing:0.7px;">Adulte</div>
<div class="t" style="left:1554.0px;top:744.1px;font-size:16px;font-weight:400;color:#2d2d2d;letter-spacing:0.49px;width:201px;text-align:center;">10/11/2023</div>
<div class="t" style="left:1775.0px;top:744.1px;font-size:16px;font-weight:400;color:#2d2d2d;letter-spacing:0.2px;">11/11/2023</div>
<svg style="position:absolute;left:1083px;top:741px;" width="20" height="19" viewBox="0 0 20 19" fill="none" stroke-linecap="round" stroke-linejoin="round"><path d="M10 3.5 C7.5 2 4.5 1.8 1.5 2.5 V15.5 C4.5 14.8 7.5 15 10 17 C12.5 15 15.5 14.8 18.5 15.5 V2.5 C15.5 1.8 12.5 2 10 3.5 Z M10 3.5 V17" stroke="#f0462e" stroke-width="1.4"/><path d="M4.5 6.5 H7 M4.5 9.5 H7" stroke="#f0462e" stroke-width="1.2"/></svg>
<svg style="position:absolute;left:80px;top:742px;" width="22" height="21" viewBox="0 0 22 21" fill="none" stroke-linecap="round" stroke-linejoin="round"><path d="M10.3 1 A8.7 8.7 0 1 0 19 9.7" stroke="#36a6ee" stroke-width="1.6"/><path d="M12.3 3.5 H19 M12.3 6.1 H16 M18 17 L20.3 19.2" stroke="#36a6ee" stroke-width="1.6"/></svg>
<svg style="position:absolute;left:107px;top:742px;" width="22" height="21" viewBox="0 0 22 21" fill="none" stroke-linecap="round" stroke-linejoin="round"><path d="M2 10 C2 7 3.5 5.5 6.5 5.2 C7.5 5.1 8 4.6 8.4 3.6 C9 2 9.8 1.2 11 1.2 C12.2 1.2 13 2 13.6 3.6 C14 4.6 14.5 5.1 15.5 5.2 C18.5 5.5 20 7 20 10 V15.5 C20 18 18.5 19.5 16 19.5 H6 C3.5 19.5 2 18 2 15.5 Z" stroke="#333" stroke-width="1.5"/><circle cx="11" cy="12.2" r="2.8" stroke="#333" stroke-width="1.5"/><path d="M9.7 6 H12.3" stroke="#333" stroke-width="1.3"/></svg>
<svg style="position:absolute;left:135px;top:742px;" width="22" height="21" viewBox="0 0 22 21" fill="none" stroke-linecap="round" stroke-linejoin="round"><path d="M18.6 12.3 A8.7 8.7 0 1 0 9.5 18.5" stroke="#8e9b1f" stroke-width="1.6"/><path d="M10 5.3 V9.7 L7 12.6" stroke="#8e9b1f" stroke-width="1.6"/><path d="M18.5 14 L18.2 18.2 L14 17.8 Z" fill="#8e9b1f" stroke="#8e9b1f" stroke-width="1"/></svg>
<svg style="position:absolute;left:163px;top:742px;" width="18" height="19" viewBox="0 0 18 19" fill="none" stroke-linecap="round" stroke-linejoin="round"><path d="M2 17 L2.7 13 L11.3 4 C12.6 2.7 14.4 2.7 15.6 3.9 C16.8 5.1 16.8 6.9 15.4 8.2 L6.8 16.5 Z" stroke="#f5b50b" stroke-width="1.5"/><path d="M10 5.5 L14.2 9.7" stroke="#f5b50b" stroke-width="1.5"/></svg>
<svg style="position:absolute;left:190px;top:743px;" width="18" height="16" viewBox="0 0 18 16" fill="none" stroke-linecap="round" stroke-linejoin="round"><path d="M3.8 3 L1.3 5.4 L3.8 7.9 M1.3 5.4 H11.9 A4.75 4.75 0 0 1 11.9 14.9 H4.6" stroke="#333" stroke-width="1.6"/></svg>
<div style="position:absolute;left:263px;top:742px;width:16px;height:16px;background:#fff;border:1px solid #666;border-radius:3px;"></div>
<div style="position:absolute;left:321px;top:742px;width:18px;height:18px;border-radius:50%;background:#f53b2b;"></div>
<div style="position:absolute;left:63px;top:770px;width:1767px;height:37px;background:#f8f8f8;"></div>
<div style="position:absolute;left:152px;top:807px;width:1678px;height:1px;background:#cdcdcd;"></div>
<div class="t" style="left:400.4px;top:782.1px;font-size:16px;font-weight:400;color:#2d2d2d;letter-spacing:0.43px;">Médiathèque John Lennon</div>
<div class="t" style="left:652.5px;top:782.1px;font-size:16px;font-weight:400;color:#2d2d2d;letter-spacing:0.43px;">Médiathèque John Lennon</div>
<div class="t" style="left:898.2px;top:782.1px;font-size:16px;font-weight:400;color:#2d2d2d;letter-spacing:-0.18px;">C019015075Y</div>
<div class="t" style="left:1113.4px;top:782.1px;font-size:16px;font-weight:700;color:#f2452f;letter-spacing:-0.34px;">RANTANPLAN (11) : Le Chameau</div>
<div class="t" style="left:1445.6px;top:782.1px;font-size:16px;font-weight:400;color:#2d2d2d;letter-spacing:0.7px;">Jeune</div>
<div class="t" style="left:1554.0px;top:782.1px;font-size:16px;font-weight:400;color:#2d2d2d;letter-spacing:0.49px;width:201px;text-align:center;">10/11/2023</div>
<div class="t" style="left:1775.0px;top:782.1px;font-size:16px;font-weight:400;color:#2d2d2d;letter-spacing:0.2px;">11/11/2023</div>
<svg style="position:absolute;left:1083px;top:779px;" width="20" height="19" viewBox="0 0 20 19" fill="none" stroke-linecap="round" stroke-linejoin="round"><path d="M10 3.5 C7.5 2 4.5 1.8 1.5 2.5 V15.5 C4.5 14.8 7.5 15 10 17 C12.5 15 15.5 14.8 18.5 15.5 V2.5 C15.5 1.8 12.5 2 10 3.5 Z M10 3.5 V17" stroke="#f0462e" stroke-width="1.4"/><path d="M4.5 6.5 H7 M4.5 9.5 H7" stroke="#f0462e" stroke-width="1.2"/></svg>
<svg style="position:absolute;left:80px;top:780px;" width="22" height="21" viewBox="0 0 22 21" fill="none" stroke-linecap="round" stroke-linejoin="round"><path d="M10.3 1 A8.7 8.7 0 1 0 19 9.7" stroke="#36a6ee" stroke-width="1.6"/><path d="M12.3 3.5 H19 M12.3 6.1 H16 M18 17 L20.3 19.2" stroke="#36a6ee" stroke-width="1.6"/></svg>
<svg style="position:absolute;left:107px;top:780px;" width="22" height="21" viewBox="0 0 22 21" fill="none" stroke-linecap="round" stroke-linejoin="round"><path d="M2 10 C2 7 3.5 5.5 6.5 5.2 C7.5 5.1 8 4.6 8.4 3.6 C9 2 9.8 1.2 11 1.2 C12.2 1.2 13 2 13.6 3.6 C14 4.6 14.5 5.1 15.5 5.2 C18.5 5.5 20 7 20 10 V15.5 C20 18 18.5 19.5 16 19.5 H6 C3.5 19.5 2 18 2 15.5 Z" stroke="#333" stroke-width="1.5"/><circle cx="11" cy="12.2" r="2.8" stroke="#333" stroke-width="1.5"/><path d="M9.7 6 H12.3" stroke="#333" stroke-width="1.3"/></svg>
<svg style="position:absolute;left:135px;top:780px;" width="22" height="21" viewBox="0 0 22 21" fill="none" stroke-linecap="round" stroke-linejoin="round"><path d="M18.6 12.3 A8.7 8.7 0 1 0 9.5 18.5" stroke="#8e9b1f" stroke-width="1.6"/><path d="M10 5.3 V9.7 L7 12.6" stroke="#8e9b1f" stroke-width="1.6"/><path d="M18.5 14 L18.2 18.2 L14 17.8 Z" fill="#8e9b1f" stroke="#8e9b1f" stroke-width="1"/></svg>
<svg style="position:absolute;left:163px;top:780px;" width="18" height="19" viewBox="0 0 18 19" fill="none" stroke-linecap="round" stroke-linejoin="round"><path d="M2 17 L2.7 13 L11.3 4 C12.6 2.7 14.4 2.7 15.6 3.9 C16.8 5.1 16.8 6.9 15.4 8.2 L6.8 16.5 Z" stroke="#f5b50b" stroke-width="1.5"/><path d="M10 5.5 L14.2 9.7" stroke="#f5b50b" stroke-width="1.5"/></svg>
<svg style="position:absolute;left:190px;top:781px;" width="18" height="16" viewBox="0 0 18 16" fill="none" stroke-linecap="round" stroke-linejoin="round"><path d="M3.8 3 L1.3 5.4 L3.8 7.9 M1.3 5.4 H11.9 A4.75 4.75 0 0 1 11.9 14.9 H4.6" stroke="#333" stroke-width="1.6"/></svg>
<div style="position:absolute;left:263px;top:780px;width:16px;height:16px;background:#fff;border:1px solid #666;border-radius:3px;"></div>
<div style="position:absolute;left:321px;top:780px;width:18px;height:18px;border-radius:50%;background:#f53b2b;"></div>
<div style="position:absolute;left:63px;top:808px;width:1767px;height:37px;background:#ededed;"></div>
<div style="position:absolute;left:152px;top:845px;width:1678px;height:1px;background:#cdcdcd;"></div>
<div class="t" style="left:400.4px;top:820.1px;font-size:16px;font-weight:400;color:#2d2d2d;letter-spacing:0.43px;">Médiathèque John Lennon</div>
<div class="t" style="left:652.5px;top:820.1px;font-size:16px;font-weight:400;color:#2d2d2d;letter-spacing:0.43px;">Médiathèque John Lennon</div>
<div class="t" style="left:898.2px;top:820.1px;font-size:16px;font-weight:400;color:#2d2d2d;letter-spacing:0.08px;">C019015085Z</div>
<div class="t" style="left:1113.4px;top:820.1px;font-size:16px;font-weight:700;color:#f2452f;letter-spacing:0.08px;">Je te hais</div>
<div class="t" style="left:1445.6px;top:820.1px;font-size:16px;font-weight:400;color:#2d2d2d;letter-spacing:0.7px;">Jeune</div>
<div class="t" style="left:1554.0px;top:820.1px;font-size:16px;font-weight:400;color:#2d2d2d;letter-spacing:0.49px;width:201px;text-align:center;">10/11/2023</div>
<div class="t" style="left:1775.0px;top:820.1px;font-size:16px;font-weight:400;color:#2d2d2d;letter-spacing:0.2px;">11/11/2023</div>
<svg style="position:absolute;left:1083px;top:817px;" width="20" height="19" viewBox="0 0 20 19" fill="none" stroke-linecap="round" stroke-linejoin="round"><path d="M10 3.5 C7.5 2 4.5 1.8 1.5 2.5 V15.5 C4.5 14.8 7.5 15 10 17 C12.5 15 15.5 14.8 18.5 15.5 V2.5 C15.5 1.8 12.5 2 10 3.5 Z M10 3.5 V17" stroke="#f0462e" stroke-width="1.4"/><path d="M4.5 6.5 H7 M4.5 9.5 H7" stroke="#f0462e" stroke-width="1.2"/></svg>
<svg style="position:absolute;left:80px;top:818px;" width="22" height="21" viewBox="0 0 22 21" fill="none" stroke-linecap="round" stroke-linejoin="round"><path d="M10.3 1 A8.7 8.7 0 1 0 19 9.7" stroke="#36a6ee" stroke-width="1.6"/><path d="M12.3 3.5 H19 M12.3 6.1 H16 M18 17 L20.3 19.2" stroke="#36a6ee" stroke-width="1.6"/></svg>
<svg style="position:absolute;left:107px;top:818px;" width="22" height="21" viewBox="0 0 22 21" fill="none" stroke-linecap="round" stroke-linejoin="round"><path d="M2 10 C2 7 3.5 5.5 6.5 5.2 C7.5 5.1 8 4.6 8.4 3.6 C9 2 9.8 1.2 11 1.2 C12.2 1.2 13 2 13.6 3.6 C14 4.6 14.5 5.1 15.5 5.2 C18.5 5.5 20 7 20 10 V15.5 C20 18 18.5 19.5 16 19.5 H6 C3.5 19.5 2 18 2 15.5 Z" stroke="#333" stroke-width="1.5"/><circle cx="11" cy="12.2" r="2.8" stroke="#333" stroke-width="1.5"/><path d="M9.7 6 H12.3" stroke="#333" stroke-width="1.3"/></svg>
<svg style="position:absolute;left:135px;top:818px;" width="22" height="21" viewBox="0 0 22 21" fill="none" stroke-linecap="round" stroke-linejoin="round"><path d="M18.6 12.3 A8.7 8.7 0 1 0 9.5 18.5" stroke="#8e9b1f" stroke-width="1.6"/><path d="M10 5.3 V9.7 L7 12.6" stroke="#8e9b1f" stroke-width="1.6"/><path d="M18.5 14 L18.2 18.2 L14 17.8 Z" fill="#8e9b1f" stroke="#8e9b1f" stroke-width="1"/></svg>
<svg style="position:absolute;left:163px;top:818px;" width="18" height="19" viewBox="0 0 18 19" fill="none" stroke-linecap="round" stroke-linejoin="round"><path d="M2 17 L2.7 13 L11.3 4 C12.6 2.7 14.4 2.7 15.6 3.9 C16.8 5.1 16.8 6.9 15.4 8.2 L6.8 16.5 Z" stroke="#f5b50b" stroke-width="1.5"/><path d="M10 5.5 L14.2 9.7" stroke="#f5b50b" stroke-width="1.5"/></svg>
<svg style="position:absolute;left:190px;top:819px;" width="18" height="16" viewBox="0 0 18 16" fill="none" stroke-linecap="round" stroke-linejoin="round"><path d="M3.8 3 L1.3 5.4 L3.8 7.9 M1.3 5.4 H11.9 A4.75 4.75 0 0 1 11.9 14.9 H4.6" stroke="#333" stroke-width="1.6"/></svg>
<div style="position:absolute;left:263px;top:818px;width:16px;height:16px;background:#fff;border:1px solid #666;border-radius:3px;"></div>
<div style="position:absolute;left:321px;top:818px;width:18px;height:18px;border-radius:50%;background:#f53b2b;"></div>
<div style="position:absolute;left:63px;top:846px;width:1767px;height:37px;background:#f8f8f8;"></div>
<div style="position:absolute;left:152px;top:883px;width:1678px;height:1px;background:#cdcdcd;"></div>
<div class="t" style="left:400.4px;top:858.1px;font-size:16px;font-weight:400;color:#2d2d2d;letter-spacing:0.43px;">Médiathèque John Lennon</div>
<div class="t" style="left:652.5px;top:858.1px;font-size:16px;font-weight:400;color:#2d2d2d;letter-spacing:0.43px;">Médiathèque John Lennon</div>
<div class="t" style="left:898.2px;top:858.1px;font-size:16px;font-weight:400;color:#2d2d2d;letter-spacing:0.02px;">C0190150875</div>
<div class="t" style="left:1113.4px;top:858.1px;font-size:16px;font-weight:700;color:#f2452f;letter-spacing:-0.01px;">Junior tennis : un manuel d'enseignem</div>
<div class="t" style="left:1445.6px;top:858.1px;font-size:16px;font-weight:400;color:#2d2d2d;letter-spacing:0.7px;">Jeune</div>
<div class="t" style="left:1554.0px;top:858.1px;font-size:16px;font-weight:400;color:#2d2d2d;letter-spacing:0.49px;width:201px;text-align:center;">10/11/2023</div>
<div class="t" style="left:1775.0px;top:858.1px;font-size:16px;font-weight:400;color:#2d2d2d;letter-spacing:0.2px;">11/11/2023</div>
<svg style="position:absolute;left:1083px;top:855px;" width="20" height="19" viewBox="0 0 20 19" fill="none" stroke-linecap="round" stroke-linejoin="round"><path d="M10 3.5 C7.5 2 4.5 1.8 1.5 2.5 V15.5 C4.5 14.8 7.5 15 10 17 C12.5 15 15.5 14.8 18.5 15.5 V2.5 C15.5 1.8 12.5 2 10 3.5 Z M10 3.5 V17" stroke="#f0462e" stroke-width="1.4"/><path d="M4.5 6.5 H7 M4.5 9.5 H7" stroke="#f0462e" stroke-width="1.2"/></svg>
<svg style="position:absolute;left:80px;top:856px;" width="22" height="21" viewBox="0 0 22 21" fill="none" stroke-linecap="round" stroke-linejoin="round"><path d="M10.3 1 A8.7 8.7 0 1 0 19 9.7" stroke="#36a6ee" stroke-width="1.6"/><path d="M12.3 3.5 H19 M12.3 6.1 H16 M18 17 L20.3 19.2" stroke="#36a6ee" stroke-width="1.6"/></svg>
<svg style="position:absolute;left:107px;top:856px;" width="22" height="21" viewBox="0 0 22 21" fill="none" stroke-linecap="round" stroke-linejoin="round"><path d="M2 10 C2 7 3.5 5.5 6.5 5.2 C7.5 5.1 8 4.6 8.4 3.6 C9 2 9.8 1.2 11 1.2 C12.2 1.2 13 2 13.6 3.6 C14 4.6 14.5 5.1 15.5 5.2 C18.5 5.5 20 7 20 10 V15.5 C20 18 18.5 19.5 16 19.5 H6 C3.5 19.5 2 18 2 15.5 Z" stroke="#333" stroke-width="1.5"/><circle cx="11" cy="12.2" r="2.8" stroke="#333" stroke-width="1.5"/><path d="M9.7 6 H12.3" stroke="#333" stroke-width="1.3"/></svg>
<svg style="position:absolute;left:135px;top:856px;" width="22" height="21" viewBox="0 0 22 21" fill="none" stroke-linecap="round" stroke-linejoin="round"><path d="M18.6 12.3 A8.7 8.7 0 1 0 9.5 18.5" stroke="#8e9b1f" stroke-width="1.6"/><path d="M10 5.3 V9.7 L7 12.6" stroke="#8e9b1f" stroke-width="1.6"/><path d="M18.5 14 L18.2 18.2 L14 17.8 Z" fill="#8e9b1f" stroke="#8e9b1f" stroke-width="1"/></svg>
<svg style="position:absolute;left:163px;top:856px;" width="18" height="19" viewBox="0 0 18 19" fill="none" stroke-linecap="round" stroke-linejoin="round"><path d="M2 17 L2.7 13 L11.3 4 C12.6 2.7 14.4 2.7 15.6 3.9 C16.8 5.1 16.8 6.9 15.4 8.2 L6.8 16.5 Z" stroke="#f5b50b" stroke-width="1.5"/><path d="M10 5.5 L14.2 9.7" stroke="#f5b50b" stroke-width="1.5"/></svg>
<svg style="position:absolute;left:190px;top:857px;" width="18" height="16" viewBox="0 0 18 16" fill="none" stroke-linecap="round" stroke-linejoin="round"><path d="M3.8 3 L1.3 5.4 L3.8 7.9 M1.3 5.4 H11.9 A4.75 4.75 0 0 1 11.9 14.9 H4.6" stroke="#333" stroke-width="1.6"/></svg>
<div style="position:absolute;left:263px;top:856px;width:16px;height:16px;background:#fff;border:1px solid #666;border-radius:3px;"></div>
<div style="position:absolute;left:321px;top:856px;width:18px;height:18px;border-radius:50%;background:#f53b2b;"></div>
</div>
<div style="position:absolute;left:1831px;top:618px;width:10px;height:137px;background:#a8a8a8;border-radius:5px;"></div>
<div style="position:absolute;left:63px;top:887px;width:1053px;height:11px;background:#a8a8a8;border-radius:6px;"></div>
<div style="position:absolute;left:182px;top:623px;width:37px;height:29px;border:2px solid #ff0000;box-sizing:border-box;"></div>
<div style="position:absolute;left:208px;top:661px;width:196px;height:39px;background:#eef5fc;border:2px solid #ff0000;box-sizing:border-box;box-shadow:0 3px 6px rgba(0,0,0,0.08);"></div>
<div class="t" style="left:228.0px;top:675.0px;font-size:16px;font-weight:400;color:#444;letter-spacing:0.27px;">Restituer l'exemplaire</div>
</body></html>
